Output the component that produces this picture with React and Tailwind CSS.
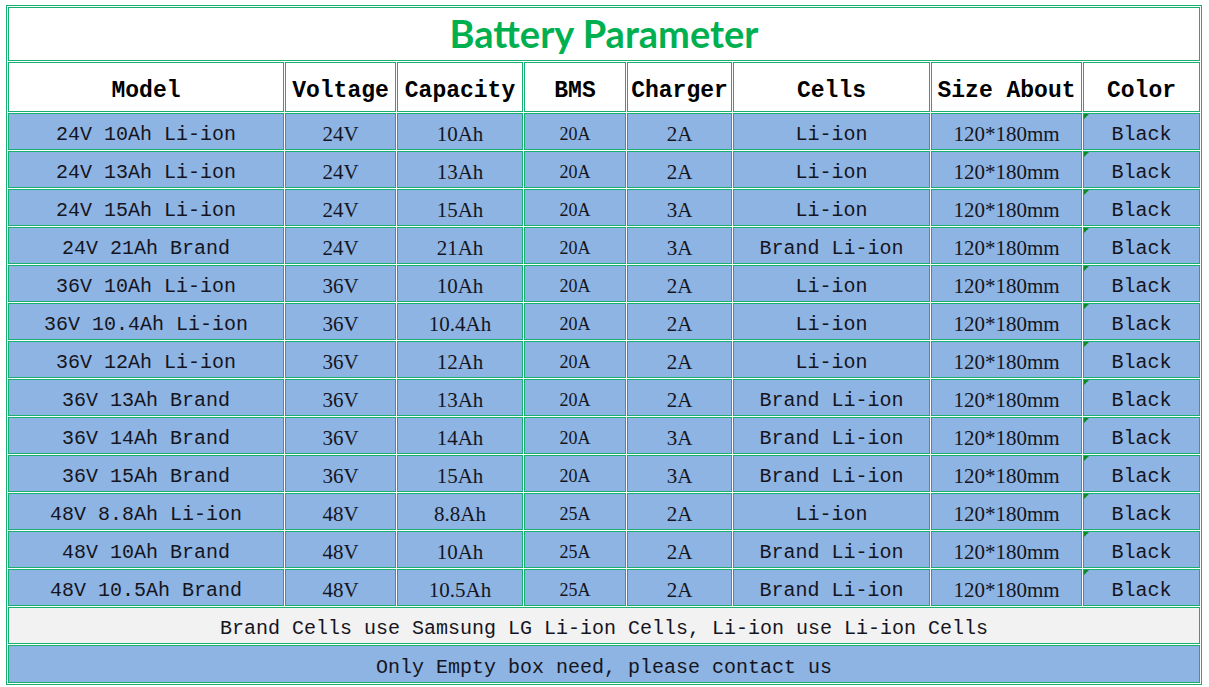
const COLS = [
  { key: 'model', label: 'Model', w: 'w-[276px]' },
  { key: 'voltage', label: 'Voltage', w: 'w-[111px]' },
  { key: 'capacity', label: 'Capacity', w: 'w-[126px]' },
  { key: 'bms', label: 'BMS', w: 'w-[102px]' },
  { key: 'charger', label: 'Charger', w: 'w-[105px]' },
  { key: 'cells', label: 'Cells', w: 'w-[197px]' },
  { key: 'size', label: 'Size About', w: 'w-[151px]' },
  { key: 'color', label: 'Color', w: 'w-[117px]' },
]

// model, voltage, capacity, bms, charger, cells
const ROWS = [
  ['24V 10Ah Li-ion', '24V', '10Ah', '20A', '2A', 'Li-ion'],
  ['24V 13Ah Li-ion', '24V', '13Ah', '20A', '2A', 'Li-ion'],
  ['24V 15Ah Li-ion', '24V', '15Ah', '20A', '3A', 'Li-ion'],
  ['24V 21Ah Brand', '24V', '21Ah', '20A', '3A', 'Brand Li-ion'],
  ['36V 10Ah Li-ion', '36V', '10Ah', '20A', '2A', 'Li-ion'],
  ['36V 10.4Ah Li-ion', '36V', '10.4Ah', '20A', '2A', 'Li-ion'],
  ['36V 12Ah Li-ion', '36V', '12Ah', '20A', '2A', 'Li-ion'],
  ['36V 13Ah Brand', '36V', '13Ah', '20A', '2A', 'Brand Li-ion'],
  ['36V 14Ah Brand', '36V', '14Ah', '20A', '3A', 'Brand Li-ion'],
  ['36V 15Ah Brand', '36V', '15Ah', '20A', '3A', 'Brand Li-ion'],
  ['48V 8.8Ah Li-ion', '48V', '8.8Ah', '25A', '2A', 'Li-ion'],
  ['48V 10Ah Brand', '48V', '10Ah', '25A', '2A', 'Brand Li-ion'],
  ['48V 10.5Ah Brand', '48V', '10.5Ah', '25A', '2A', 'Brand Li-ion'],
]

const cell = 'border border-[#17b070] p-0 text-center align-middle whitespace-nowrap leading-[24px]'
const mono = "font-['Liberation_Mono',monospace] pt-[7px]"
const serif = "font-['Liberation_Serif',serif] pt-[4px]"

export default function App() {
  return (
    <div className="bg-white w-[1209px] h-[687px] overflow-hidden pt-[5px] pl-[6px]">
      <table className="border-separate border-spacing-[1px] border border-[#17b070] table-fixed w-[1196px] text-[#15151f]">
        <colgroup>
          {COLS.map(c => <col key={c.key} className={c.w} />)}
        </colgroup>
        <tbody>
          <tr>
            <td colSpan={8} className={`${cell} h-[54px] bg-white`}>
              <span className="font-['Lato',sans-serif] font-bold text-[38px] leading-none text-[#00b050]">
                Battery Parameter
              </span>
            </td>
          </tr>
          <tr>
            {COLS.map(c => (
              <td key={c.key} className={`${cell} h-[50px] bg-white font-['Liberation_Mono',monospace] pt-[8px] font-bold text-[23px] text-black`}>
                {c.label}
              </td>
            ))}
          </tr>
          {ROWS.map((r, i) => (
            <tr key={i}>
              <td className={`${cell} h-[37px] bg-[#8db4e2] ${mono} text-[20px]`}>{r[0]}</td>
              <td className={`${cell} bg-[#8db4e2] ${serif} text-[21px]`}>{r[1]}</td>
              <td className={`${cell} bg-[#8db4e2] ${serif} text-[21px]`}>{r[2]}</td>
              <td className={`${cell} bg-[#8db4e2] ${serif} text-[18px]`}>{r[3]}</td>
              <td className={`${cell} bg-[#8db4e2] ${serif} text-[21px]`}>{r[4]}</td>
              <td className={`${cell} bg-[#8db4e2] ${mono} text-[20px]`}>{r[5]}</td>
              <td className={`${cell} bg-[#8db4e2] ${serif} text-[21px]`}>120*180mm</td>
              <td className={`${cell} relative bg-[#8db4e2] ${mono} text-[20px]`}>
                <span className="absolute left-0 top-0 w-0 h-0 border-t-[5px] border-r-[5px] border-t-[#0b8a2a] border-r-transparent" />
                Black
              </td>
            </tr>
          ))}
          <tr>
            <td colSpan={8} className={`${cell} h-[37px] bg-[#f2f2f2] ${mono} text-[20px]`}>
              Brand Cells use Samsung LG Li-ion Cells, Li-ion use Li-ion Cells
            </td>
          </tr>
          <tr>
            <td colSpan={8} className={`${cell} h-[38px] bg-[#8db4e2] ${mono} text-[20px]`}>
              Only Empty box need, please contact us
            </td>
          </tr>
        </tbody>
      </table>
    </div>
  )
}
